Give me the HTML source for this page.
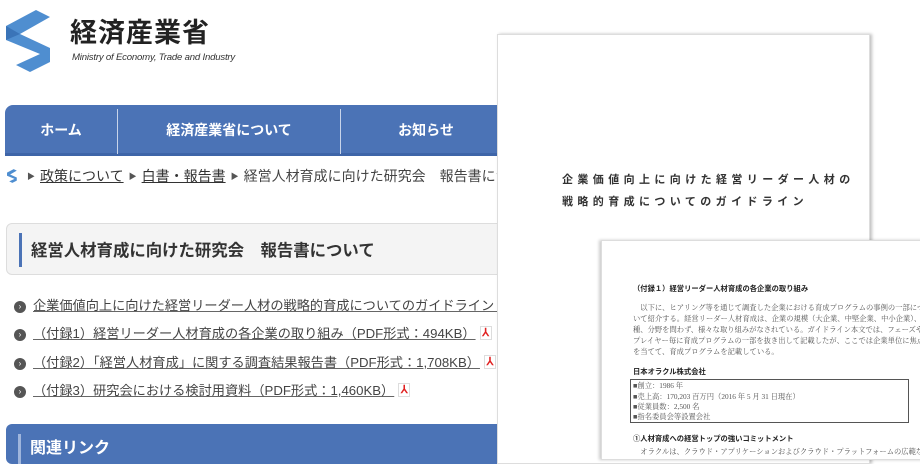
<!DOCTYPE html>
<html><head><meta charset="utf-8"><style>
*{margin:0;padding:0;box-sizing:border-box}
body{width:920px;height:450px;overflow:hidden;background:#fff;position:relative;font-family:"Liberation Sans","Noto Sans CJK JP",sans-serif;color:#333}
.abs{position:absolute}
.nav{left:5px;top:105px;width:500px;height:51px;background:#4b73b6;border-radius:8px 0 0 0;border-bottom:3px solid #3e65a8}
.nav div{position:absolute;top:0;height:51px;line-height:51px;color:#fff;font-weight:bold;font-size:14px;text-align:center}
.sep{position:absolute;top:4px;width:1px;height:45px;background:#c8d4ea}
.bc{left:8px;top:166px;font-size:14px;color:#444;white-space:nowrap}
.bc u{color:#333}
.bc .ar{font-size:8px;color:#555;margin:0 5px;vertical-align:2px}
.title{left:6px;top:223px;width:510px;height:52px;background:#f4f4f4;border:1px solid #ddd;border-radius:6px}
.title .bar{position:absolute;left:12px;top:9px;width:3px;height:34px;background:#4b73b6}
.title span{position:absolute;left:24px;top:13px;font-size:16.4px;font-weight:bold;color:#333}
.li{left:14px;font-size:13.2px;color:#444;white-space:nowrap}
.li i{display:inline-block;width:12px;height:12px;border-radius:50%;background:#555;color:#fff;font-size:8px;line-height:12px;text-align:center;font-style:normal;vertical-align:1px;margin-right:7px}
.li u{text-decoration-color:#666}
.pdf{display:inline-block;width:12px;height:14px;border:1px solid #ddd;color:#e02020;font-size:11px;line-height:12px;text-align:center;font-weight:bold;vertical-align:2px;margin-left:4px}
.rel{left:6px;top:424px;width:500px;height:40px;background:#4b73b6;border-radius:6px}
.rel .bar{position:absolute;left:12px;top:10px;width:3px;height:30px;background:#9fb5dc}
.rel span{position:absolute;left:24px;top:10px;color:#fff;font-weight:bold;font-size:16px}
.p1{left:497px;top:34px;width:373px;height:430px;background:#fff;border:1px solid #ddd;box-shadow:2px 0 3px rgba(0,0,0,.25)}
.p1 .t{position:absolute;left:64px;font-size:11px;font-weight:bold;letter-spacing:4.4px;color:#333;white-space:nowrap}
.p2{left:601px;top:240px;width:330px;height:220px;background:#fff;border:1px solid #ddd;box-shadow:-2px 0 3px rgba(0,0,0,.2)}
.p2 div{position:absolute;font-size:7.3px;color:#555;white-space:nowrap;font-family:"Liberation Serif","Noto Serif CJK SC",serif}
.p2 b{font-family:"Liberation Sans","Noto Sans CJK JP",sans-serif;color:#222}
</style></head><body>
<svg class="abs" style="left:6px;top:10px" width="54" height="62" viewBox="0 0 54 62">
<polygon points="0,16 30,0 44,7 14,24 44,38 44,52 24,62 10,55 34,44 0,30" fill="#4f8ed0"/>
<polygon points="0,16 14,24 0,30" fill="#3a74b8"/>
</svg>
<div class="abs" style="left:70px;top:20px;font-size:27px;font-weight:bold;color:#222;letter-spacing:1px;line-height:1">経済産業省</div>
<div class="abs" style="left:72px;top:52px;font-size:9.6px;font-style:italic;color:#333;letter-spacing:-.2px">Ministry of Economy, Trade and Industry</div>
<div class="abs nav">
<div style="left:0;width:112px">ホーム</div><span class="sep" style="left:112px"></span>
<div style="left:113px;width:222px">経済産業省について</div><span class="sep" style="left:335px"></span>
<div style="left:336px;width:170px">お知らせ</div>
</div>
<svg class="abs" style="left:7px;top:169px" width="12" height="14" viewBox="0 0 54 62"><polygon points="0,16 30,0 44,7 14,24 44,38 44,52 24,62 10,55 34,44 0,30" fill="#4f8ed0"/></svg>
<div class="abs bc" style="left:22px"><span class="ar">▶</span><u>政策について</u><span class="ar">▶</span><u>白書・報告書</u><span class="ar">▶</span>経営人材育成に向けた研究会　報告書について</div>
<div class="abs title"><div class="bar"></div><span>経営人材育成に向けた研究会　報告書について</span></div>
<div class="abs li" style="top:295px"><i>›</i><u>企業価値向上に向けた経営リーダー人材の戦略的育成についてのガイドライン（</u></div>
<div class="abs li" style="top:323px"><i>›</i><u>（付録1）経営リーダー人材育成の各企業の取り組み（PDF形式：494KB）</u><span class="pdf">⅄</span></div>
<div class="abs li" style="top:352px"><i>›</i><u>（付録2）「経営人材育成」に関する調査結果報告書（PDF形式：1,708KB）</u><span class="pdf">⅄</span></div>
<div class="abs li" style="top:380px"><i>›</i><u>（付録3）研究会における検討用資料（PDF形式：1,460KB）</u><span class="pdf">⅄</span></div>
<div class="abs rel"><div class="bar"></div><span>関連リンク</span></div>
<div class="abs p1">
<div class="t" style="top:136px">企業価値向上に向けた経営リーダー人材の</div>
<div class="t" style="top:158px">戦略的育成についてのガイドライン</div>
</div>
<div class="abs p2">
<div style="left:31px;top:43px"><b>（付録１）経営リーダー人材育成の各企業の取り組み</b></div>
<div style="left:31px;top:62px">　以下に、ヒアリング等を通じて調査した企業における育成プログラムの事例の一部につ</div>
<div style="left:31px;top:73px">いて紹介する。経営リーダー人材育成は、企業の規模（大企業、中堅企業、中小企業）、業</div>
<div style="left:31px;top:84px">種、分野を問わず、様々な取り組みがなされている。ガイドライン本文では、フェーズや</div>
<div style="left:31px;top:95px">プレイヤー毎に育成プログラムの一部を抜き出して記載したが、ここでは企業単位に焦点</div>
<div style="left:31px;top:106px">を当てて、育成プログラムを記載している。</div>
<div style="left:31px;top:126px"><b>日本オラクル株式会社</b></div>
<div style="left:28px;top:138px;width:279px;height:44px;border:1px solid #555"></div>
<div style="left:31px;top:140px">■創立：1986 年</div>
<div style="left:31px;top:151px">■売上高：170,203 百万円（2016 年 5 月 31 日現在）</div>
<div style="left:31px;top:161px">■従業員数：2,500 名</div>
<div style="left:31px;top:171px">■指名委員会等設置会社</div>
<div style="left:31px;top:193px"><b>①人材育成への経営トップの強いコミットメント</b></div>
<div style="left:31px;top:206px">　オラクルは、クラウド・アプリケーションおよびクラウド・プラットフォームの広範な</div>
</div>
</body></html>
